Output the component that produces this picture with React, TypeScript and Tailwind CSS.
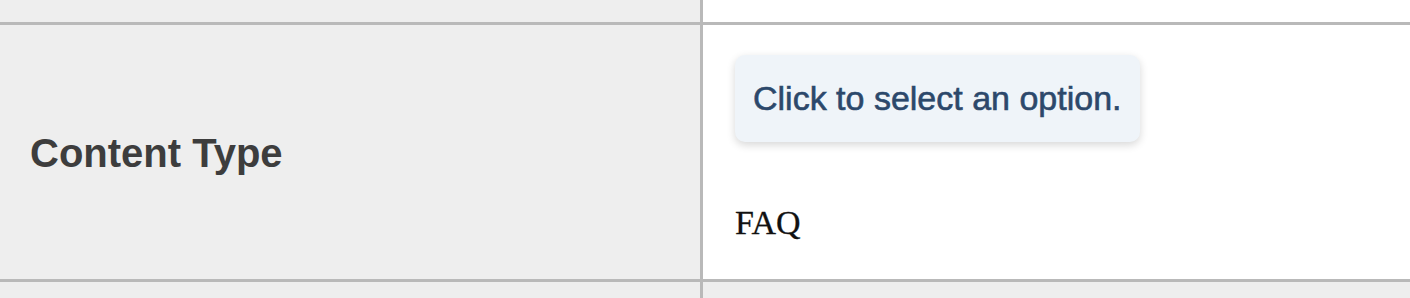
import React from 'react'

function App() {
    return (
        <div className="grid h-[298px] w-[1410px] grid-cols-[700px_1fr] grid-rows-[22px_254px_1fr] gap-[3px] overflow-hidden bg-[#b9b9b9]">
            {/* previous row */}
            <div className="bg-[#eeeeee]" />
            <div className="bg-white" />

            {/* Content Type row */}
            <div className="flex items-center bg-[#eeeeee] pl-[30px] pt-[2px]">
                <span className="font-['Liberation_Sans',Arial,sans-serif] text-[40px] font-bold text-[#3d3d3d]">
                    Content Type
                </span>
            </div>
            <div className="flex flex-col items-start bg-white pl-[32px] pt-[30px]">
                <button className="flex h-[87px] items-center rounded-[10px] bg-[#eff4f9] px-[18px] shadow-[0_3px_8px_rgba(0,0,0,0.16)]">
                    <span className="font-['Liberation_Sans',Arial,sans-serif] text-[34px] text-[#2c486b] [-webkit-text-stroke:0.6px_#2c486b]">
                        Click to select an option.
                    </span>
                </button>
                <div className="mt-[55px] font-['Liberation_Serif','Times_New_Roman',serif] text-[34px] text-[#111111] [-webkit-text-stroke:0.3px_#111111]">
                    FAQ
                </div>
            </div>

            {/* next row */}
            <div className="bg-[#eeeeee]" />
            <div className="bg-[#eeeeee]" />
        </div>
    )
}

export default App
